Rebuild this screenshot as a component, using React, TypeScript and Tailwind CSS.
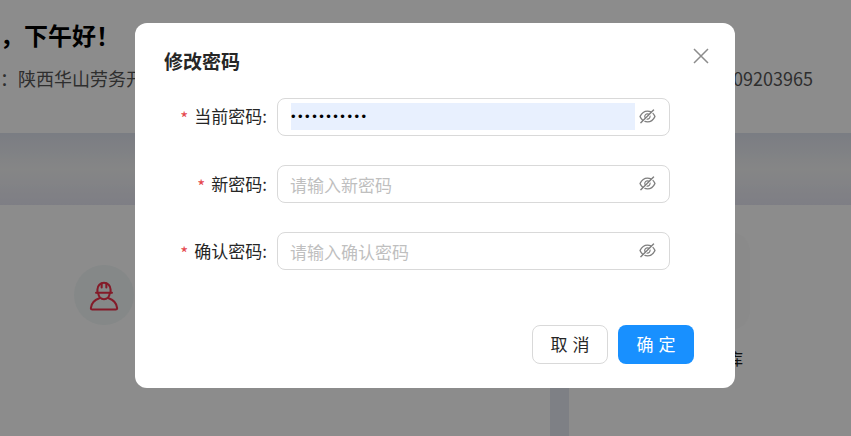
import { AiOutlineEyeInvisible } from "react-icons/ai";

const fields = [
  { label: "当前密码", placeholder: "请输入当前密码", value: "abcdefghijk" },
  { label: "新密码", placeholder: "请输入新密码", value: "" },
  { label: "确认密码", placeholder: "请输入确认密码", value: "" },
];

function WorkerIcon() {
  return (
    <svg width="30" height="32" viewBox="0 0 32 34" fill="none" stroke="#f0304a" strokeWidth="2.200" strokeLinecap="round" strokeLinejoin="round">
      <path d="M9 14.500V11a7 7 0 0 1 14 0v3.500" />
      <path d="M7.500 14.500h17" />
      <path d="M13.500 4.800V9M18.500 4.800V9" />
      <path d="M9.800 15c.4 3.600 3 6.500 6.200 6.500s5.800-2.900 6.200-6.500" />
      <path d="M11 20.500c-4.500 1.500-8.500 5.500-9 10.500 0 1 .5 1.500 1.500 1.500h25c1 0 1.500-.5 1.500-1.500-.5-5-4.500-9-9-10.500" />
    </svg>
  );
}

function Background() {
  return (
    <div className="flex h-[436px] w-[851px] flex-col overflow-hidden bg-white">
      <div className="h-[133px] shrink-0 pt-[18px]">
        <h1 className="-ml-[48px] text-[24px] leading-[34px] font-bold whitespace-nowrap text-black">你好，下午好！</h1>
        <div className="mt-[13px] flex justify-between pr-[38px] text-[18px] leading-[26px] text-[#555]">
          <span className="-ml-[18px] whitespace-nowrap">单：陕西华山劳务开发有限公司</span>
          <span className="whitespace-nowrap">联系电话：13909203965</span>
        </div>
      </div>
      <div className="h-[72px] shrink-0 bg-linear-to-b from-[#dfe3ee] via-[#f3f4f5] to-[#e6e6f2]" />
      <div className="flex flex-1 gap-[19px] bg-[#e6e9f2]">
        <div className="flex w-[550px] shrink-0 bg-white pt-[60px] pl-[74px]">
          <div className="flex size-[60px] items-center justify-center rounded-full bg-[#f2f8f8]">
            <WorkerIcon />
          </div>
        </div>
        <div className="flex-1 bg-white pt-[27px] pl-[101px]">
          <div className="h-[98px] w-[80px] rounded-[20px] bg-[#fbfbfb]" />
          <p className="mt-[16px] -ml-[89px] w-[262px] pr-[100px] text-right text-[16px] leading-[24px] text-[#222]">仓库</p>
        </div>
      </div>
    </div>
  );
}

export default function App() {
  return (
    <div className="relative h-[436px] w-[851px] overflow-hidden font-['Noto_Sans_CJK_SC','Liberation_Sans',sans-serif]">
      <Background />
      <div className="absolute inset-0 bg-black/45 pt-[23px] pl-[135px]">
        <div className="h-[365px] w-[600px] rounded-xl bg-white pt-[23px] pr-[41px] pl-[29px]">
          <div className="flex items-start justify-between">
            <h2 className="text-[19px] leading-[30px] font-bold text-[#262626]">修改密码</h2>
            <svg className="mt-[1px] -mr-[16px]" width="18" height="18" viewBox="0 0 18 18" stroke="#8c8c8c" strokeWidth="1.500">
              <path d="M2 2L16 16M16 2L2 16" />
            </svg>
          </div>
          <div className="mt-[22px] flex flex-col gap-[29px]">
            {fields.map((f) => (
              <div key={f.label} className="flex items-center">
                <label className={`flex w-[103px] shrink-0 justify-end text-[17px] leading-[24px] whitespace-nowrap text-[#262626] ${f.value ? "pb-[2px]" : ""}`}>
                  <span className="mr-[6px] translate-y-[2px] text-[#e5484d]">*</span>
                  {f.label}:
                </label>
                <div className="ml-[10px] flex h-[38px] w-[393px] items-center rounded-lg border border-[#d9d9d9] bg-white pr-[12px] pl-[13px]">
                  {f.value ? (
                    <input
                      readOnly
                      type="password"
                      value={f.value}
                      className="mb-[2px] h-[27px] w-[344px] bg-[#e8f0fe] font-['Liberation_Sans'] text-[13px] tracking-[2.500px] text-black outline-none"
                    />
                  ) : (
                    <input
                      readOnly
                      type="text"
                      placeholder={f.placeholder}
                      className="-ml-[1px] h-[27px] w-[345px] text-[17px] outline-none placeholder:text-[#bfbfbf]"
                    />
                  )}
                  <AiOutlineEyeInvisible className="mb-[2px] ml-auto text-[#7f7f7f]" size={19} />
                </div>
              </div>
            ))}
          </div>
          <div className="mt-[55px] flex justify-end gap-[10px]">
            <button className="h-[39px] w-[76px] rounded-lg border border-[#d9d9d9] bg-white pb-[2px] text-[17px] text-[#262626]">
              <span className="-mr-[5px] tracking-[5px]">取消</span>
            </button>
            <button className="h-[39px] w-[76px] rounded-lg bg-[#1890ff] pb-[2px] text-[17px] text-white">
              <span className="-mr-[5px] tracking-[5px]">确定</span>
            </button>
          </div>
        </div>
      </div>
    </div>
  );
}
